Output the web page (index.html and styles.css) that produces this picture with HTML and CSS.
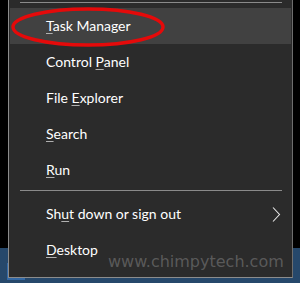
FILE: index.html
```html
<!DOCTYPE html>
<html>
<head>
<meta charset="utf-8">
<link rel="stylesheet" href="styles.css">
</head>
<body>
<div class="screen">
  <div class="menu">
    <div class="sep"></div>
    <div class="item active"><span><u>T</u>ask Manager</span></div>
    <div class="item"><span>Control <u>P</u>anel</span></div>
    <div class="item"><span>File <u>E</u>xplorer</span></div>
    <div class="item"><span><u>S</u>earch</span></div>
    <div class="item"><span><u>R</u>un</span></div>
    <div class="sep mid"></div>
    <div class="item"><span>Sh<u>u</u>t down or sign out</span>
      <svg class="chev" width="9" height="15" viewBox="0 0 9 15"><polyline points="1,0.5 7.5,7.5 1,14.5" fill="none" stroke="#e8e8e8" stroke-width="1.1"/></svg>
    </div>
    <div class="item"><span><u>D</u>esktop</span></div>
  </div>
  <svg class="ring" width="160" height="44" viewBox="0 0 160 44"><ellipse cx="78" cy="21" rx="75" ry="18" fill="none" stroke="#e50a0a" stroke-width="3.4"/></svg>
  <div class="mark">www.chimpytech.com</div>
  <div class="taskicon"></div>
</div>
</body>
</html>
```
FILE: styles.css
```css
html, body {
  margin: 0;
  padding: 0;
}
body {
  width: 300px;
  height: 283px;
  overflow: hidden;
  background: linear-gradient(to bottom, #000 0, #000 248px, #26486b 248px, #26486b 100%);
}
.screen {
  position: relative;
  width: 300px;
  height: 283px;
  padding-left: 8px;
  box-sizing: border-box;
}
.menu {
  position: relative;
  z-index: 1;
  width: 285px;
  height: 278px;
  box-sizing: border-box;
  background: #2b2b2b;
  border-left: 1px solid #8c8c8c;
  border-right: 1px solid #6e6e6e;
  border-bottom: 1px solid #8c8c8c;
  padding: 2px 1px 0 1px;
  font-family: Lato, "Noto Sans", sans-serif;
  font-size: 14px;
  color: #fff;
  display: flex;
  flex-direction: column;
}
.sep {
  height: 1px;
  margin: 0 9px 5px 10px;
  background: #8a8a8a;
}
.sep.mid {
  margin: 2px 9px 5px 10px;
}
.item {
  height: 36px;
  display: flex;
  align-items: center;
  justify-content: space-between;
  padding: 0 10px 0 36px;
  flex-shrink: 0;
}
.item.active {
  background: #414141;
}
.item span {
  line-height: 16px;
}
u {
  text-decoration-color: #b0b0b0;
  text-decoration-thickness: 1px;
  text-underline-offset: 2px;
}
.chev {
  display: block;
}
.ring {
  position: absolute;
  z-index: 2;
  left: 10px;
  top: 6px;
}
.mark {
  position: absolute;
  z-index: 2;
  left: 108px;
  top: 252px;
  font-family: "DejaVu Sans", Verdana, sans-serif;
  font-size: 16px;
  color: rgba(130, 130, 130, 0.55);
}
.taskicon {
  position: absolute;
  z-index: 0;
  left: 7px;
  top: 263px;
  width: 18px;
  height: 17px;
  background: #3a78bd;
  opacity: 0.7;
}
```
